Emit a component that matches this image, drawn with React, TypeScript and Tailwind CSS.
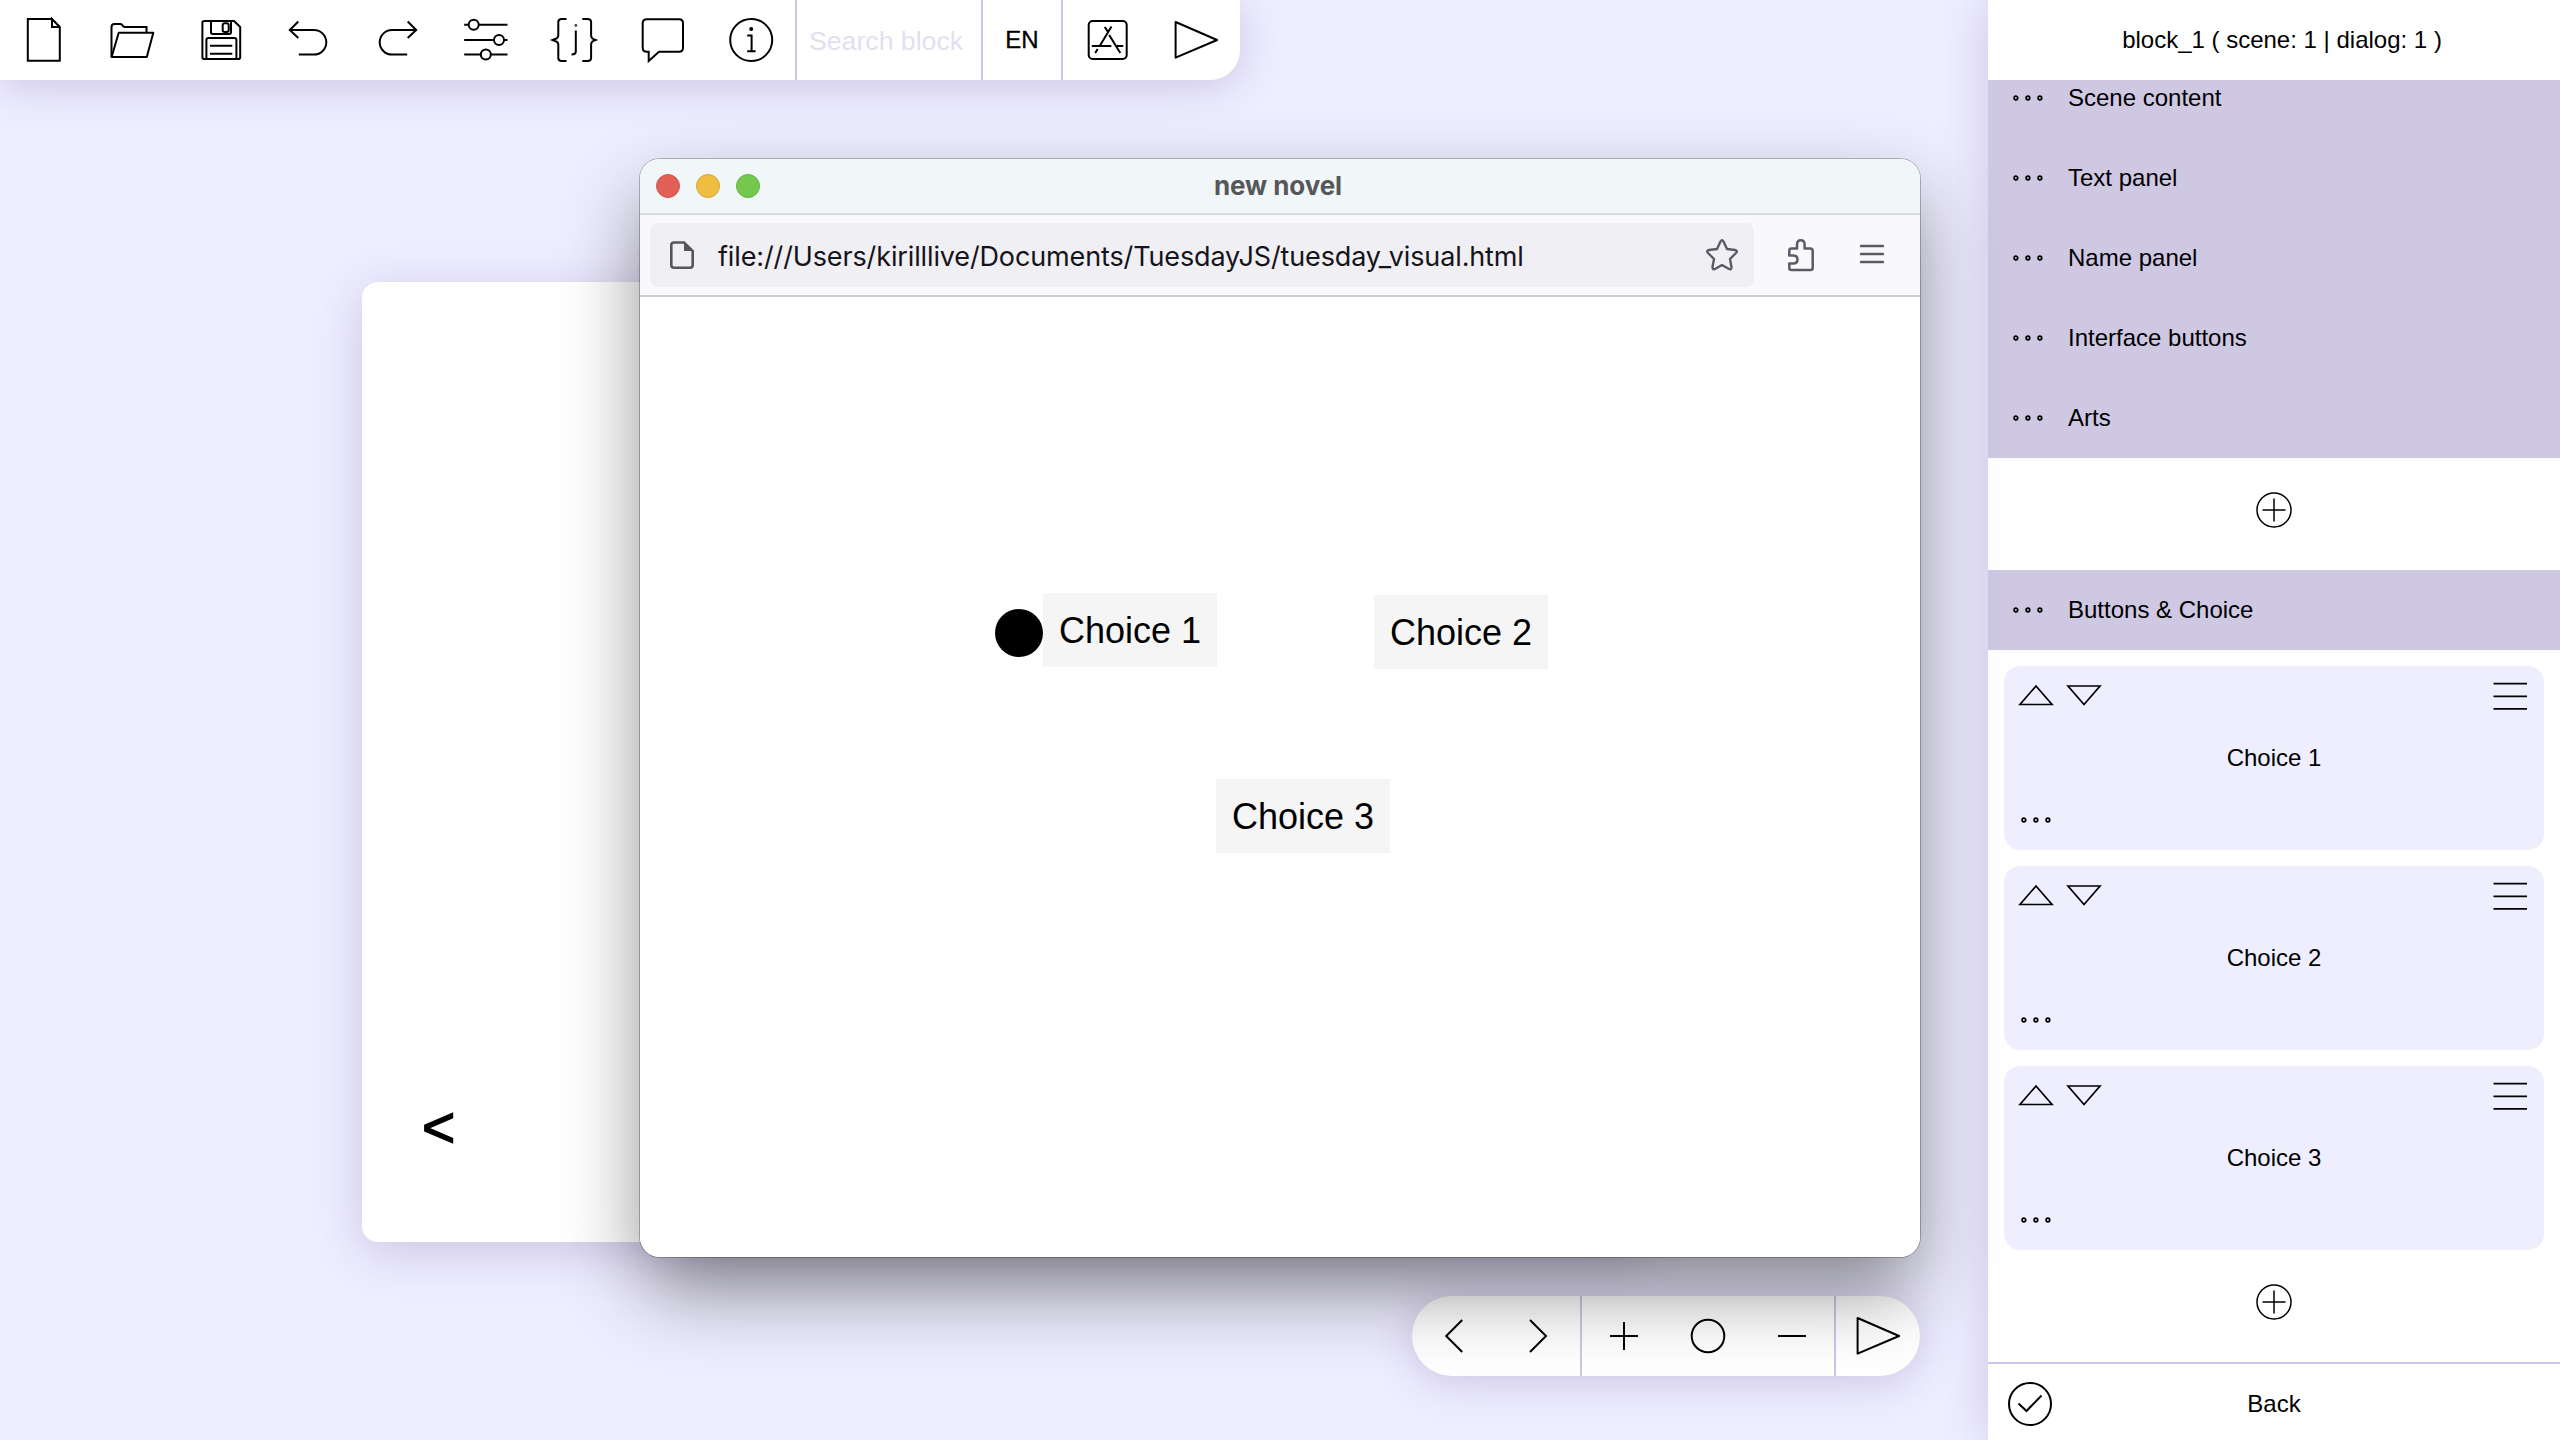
import type { ReactNode } from "react";

type IconProps = { children: ReactNode; w?: number; h?: number; stroke?: number; className?: string };

function Icon({ children, w = 48, h = 48, stroke = 2, className = "" }: IconProps) {
  return (
    <svg
      width={w}
      height={h}
      viewBox={`0 0 ${w} ${h}`}
      fill="none"
      stroke="currentColor"
      strokeWidth={stroke}
      className={`block shrink-0 overflow-visible ${className}`}
    >
      {children}
    </svg>
  );
}

const toolbarIcons: ReactNode[] = [
  <>
    <path d="M32 3H7.8V44.7H39.8V11L32 3V11H39.8" />
  </>,
  <>
    <path d="M10.7 16.7H45.3L38.8 41H3.6Z" strokeLinejoin="round" />
    <path d="M3.5 41V11Q3.5 8 6.5 8H12.5Q13.8 8 14.3 9.2T16.5 11H38.5V16.7" />
  </>,
  <>
    <path d="M7 5H37L43.2 11V41.2Q43.2 43 41.4 43H7.2Q5.4 43 5.4 41.2V6.8Q5.4 5 7.2 5Z" />
    <path d="M14 5V16.3Q14 18 15.8 18H32.2Q34 18 34 16.3V5" />
    <rect x="25.7" y="7.3" width="6" height="8.8" rx="2" />
    <path d="M9.4 43V24Q9.4 22 11.4 22H37.4Q39.4 22 39.4 24V43" />
    <path d="M13 29.7H35.3M13 37.7H35.3" />
  </>,
  <path d="M13.3 5.5L4.8 14L13.3 22M4.8 14H29A12.3 12.3 0 0 1 29 38.6H13.8" />,
  <path d="M34.7 5.5L43.2 14L34.7 22M43.2 14H19A12.3 12.3 0 0 0 19 38.6H34.2" />,
  <>
    <path d="M2.2 8.8H6.5M16.6 8.8H45.5M2.2 24H32M42 24H45.5M2.2 38.6H18.7M28.9 38.6H45.5" />
    <circle cx="11.7" cy="8.8" r="5" />
    <circle cx="37" cy="24" r="5" />
    <circle cx="23.8" cy="38.6" r="5" />
  </>,
  <>
    <path d="M16.5 3H11.8Q8.3 3 8.3 6V19Q8.3 22 5.8 22.8L2.6 24L5.8 25.2Q8.3 26 8.3 29V42Q8.3 45 11.8 45H16.5" />
    <path d="M32.3 3H37.5Q41.1 3 41.1 6V19Q41.1 22 43 22.8L45.8 24L43 25.2Q41.1 26 41.1 29V42Q41.1 45 37.5 45H32.3" />
    <circle cx="25.8" cy="9.4" r="1" strokeWidth="1" />
    <path d="M25.8 14.5V35.5Q25.8 38.3 21.5 38.5" />
  </>,
  <path d="M8.8 3.3H41Q45 3.3 45 7.3V31.7Q45 35.7 41 35.7H21L10.7 45V35.7H8.8Q4.7 35.7 4.7 31.7V7.3Q4.7 3.3 8.8 3.3Z" />,
  <>
    <circle cx="24.2" cy="24" r="21" />
    <circle cx="24.2" cy="13" r="2" fill="currentColor" stroke="none" />
    <path d="M20.2 19.5H24.6V35.3M20.2 35.3H28.6" />
  </>,
];

const Play = () => (
  <Icon>
    <path d="M3.6 6L45.1 24L3.6 41.6Z" strokeLinejoin="round" />
  </Icon>
);

const Dots = () => (
  <Icon w={32} h={10} stroke={1.7}>
    <circle cx="3.9" cy="5" r="1.8" />
    <circle cx="15.9" cy="5" r="1.8" />
    <circle cx="27.9" cy="5" r="1.8" />
  </Icon>
);

const PlusCircle = () => (
  <Icon w={40} h={40} stroke={1.5}>
    <circle cx="20" cy="20" r="17" />
    <path d="M8.5 20H31.5M20 8.5V31.5" />
  </Icon>
);

function Toolbar() {
  return (
    <div className="flex h-20 w-[1240px] rounded-br-[30px] bg-white shadow-[0_6px_44px_#c9c4e4]">
      <div className="flex w-[795px]">
        {toolbarIcons.map((icon, i) => (
          <button key={i} className="flex flex-1 items-center justify-center">
            <Icon>{icon}</Icon>
          </button>
        ))}
      </div>
      <div className="flex w-[188px] items-center border-x-2 border-[#cdc7e6] pt-px pl-3 text-[26.67px] text-[#e2dff0]">
        Search block
      </div>
      <div className="flex w-20 items-center justify-center border-r-2 border-[#cdc7e6] text-[24px] [-webkit-text-stroke:0.3px_black]">
        EN
      </div>
      <div className="flex flex-1">
        <button className="flex flex-1 items-center justify-center">
          <Icon>
            <rect x="5.7" y="5" width="38" height="38" rx="4" />
            <path d="M28.5 10.5L16.7 30M21.7 11L25.6 16.6M26.2 19L37.3 37M8.8 30H28.3M32 30H40.3M14.7 33L12.2 37" />
          </Icon>
        </button>
        <button className="flex flex-1 items-center justify-center">
          <Play />
        </button>
      </div>
    </div>
  );
}

function BottomBar() {
  return (
    <div className="mt-[54px] ml-[1412px] flex h-20 w-[508px] rounded-full bg-white shadow-[0_6px_44px_#c9c4e4]">
      <div className="flex w-[168px] items-center">
        <div className="flex flex-1 justify-center">
          <Icon>
            <path d="M32.2 8L16.2 24L32.2 40" />
          </Icon>
        </div>
        <div className="flex flex-1 justify-center">
          <Icon>
            <path d="M16 8L32 24L16 40" />
          </Icon>
        </div>
      </div>
      <div className="flex w-[256px] items-center border-x-2 border-[#cdc7e6]">
        <div className="flex flex-1 justify-center">
          <Icon>
            <path d="M10 24H38M24 10V38" />
          </Icon>
        </div>
        <div className="flex flex-1 justify-center">
          <Icon>
            <circle cx="24" cy="24" r="16.3" />
          </Icon>
        </div>
        <div className="flex flex-1 justify-center">
          <Icon>
            <path d="M10 24H38" />
          </Icon>
        </div>
      </div>
      <div className="flex flex-1 items-center justify-center">
        <Play />
      </div>
    </div>
  );
}

function SectionRow({ label }: { label: string }) {
  return (
    <div className="flex h-20 shrink-0 items-center bg-[#cec8e3] pl-6">
      <Dots />
      <span className="pl-6">{label}</span>
    </div>
  );
}

function ChoiceCard({ label }: { label: string }) {
  return (
    <div className="flex h-[184px] shrink-0 flex-col justify-between rounded-2xl bg-[#efeeff] px-4">
      <div className="flex h-[60px] items-center justify-between">
        <div className="flex gap-2">
          <Icon w={40} h={28} stroke={1.7}>
            <path d="M16 4L32 22.500H0Z" />
          </Icon>
          <Icon w={40} h={28} stroke={1.7}>
            <path d="M16 22.500L32 4H0Z" />
          </Icon>
        </div>
        <Icon w={36} h={32} stroke={1.8}>
          <path d="M1.5 3.7H35M1.5 16.4H35M1.5 28.8H35" />
        </Icon>
      </div>
      <div className="text-center leading-8">{label}</div>
      <div className="flex h-[60px] items-center">
        <Dots />
      </div>
    </div>
  );
}

function Sidebar() {
  return (
    <aside className="relative flex h-full w-[572px] flex-col bg-white text-[24px] shadow-[0_0_44px_#c9c4e4]">
      <header className="flex h-20 shrink-0 items-center justify-center pl-4 whitespace-pre">
        block_1 ( scene: 1 | dialog: 1 )
      </header>
      <div className="flex flex-1 flex-col overflow-hidden">
        <div className="-mt-[22px] flex flex-col">
          {["Scene content", "Text panel", "Name panel", "Interface buttons", "Arts"].map((label) => (
            <SectionRow key={label} label={label} />
          ))}
        </div>
        <div className="flex h-[112px] shrink-0 justify-center pt-8">
          <PlusCircle />
        </div>
        <SectionRow label="Buttons & Choice" />
        <div className="flex flex-col gap-4 px-4 pt-4">
          <ChoiceCard label="Choice 1" />
          <ChoiceCard label="Choice 2" />
          <ChoiceCard label="Choice 3" />
        </div>
        <div className="flex justify-center pt-8">
          <PlusCircle />
        </div>
      </div>
      <footer className="grid h-[78px] shrink-0 grid-cols-[84px_1fr_84px] items-center border-t-2 border-[#cdc7e2] pt-1">
        <Icon className="ml-[18px]">
          <circle cx="24" cy="24" r="21" />
          <path d="M12.5 23.5L20.5 31L35.5 15.5" />
        </Icon>
        <span className="text-center">Back</span>
      </footer>
    </aside>
  );
}

function NovelButton({ label, className }: { label: string; className: string }) {
  return (
    <div
      className={`absolute flex h-[74px] w-[174px] items-center justify-center bg-[#f5f5f5] pt-px text-[36px] ${className}`}
    >
      {label}
    </div>
  );
}

function BrowserWindow() {
  return (
    <div className="absolute top-[159px] left-[640px] flex h-[1098px] w-[1280px] flex-col overflow-hidden rounded-[20px] bg-white">
      <div className="grid h-14 shrink-0 grid-cols-[1fr_auto_1fr] items-center border-b-2 border-[#d6dcdf] bg-[#f1f6f9] pr-5 pl-4">
        <div className="flex gap-4">
          <span className="size-6 rounded-full border border-[#cf5650] bg-[#e25f58]" />
          <span className="size-6 rounded-full border border-[#d8a437] bg-[#efbd3f]" />
          <span className="size-6 rounded-full border border-[#60b440] bg-[#76c84c]" />
        </div>
        <span className="pb-px font-['Inter'] text-[26px] font-bold tracking-[-0.1px] text-[#555759]">new novel</span>
      </div>
      <div className="flex h-[82px] shrink-0 items-center border-b-2 border-[#cccccf] bg-[#f9f9fb] pl-2.5 text-[#5b5b66]">
        <div className="flex h-16 w-[1104px] items-center rounded-lg bg-[#f0eff4] pr-3.5 pl-[18px]">
          <Icon w={28} h={32} stroke={2.6} className="text-[#55555c]">
            <path d="M6 3.5H16L24.7 12V26Q24.7 28.7 22 28.7H6Q3.3 28.7 3.3 26V6Q3.3 3.5 6 3.5Z" />
            <path d="M16 3.5V12H24.7Z" fill="currentColor" stroke="none" />
          </Icon>
          <span className="flex-1 pt-1 pl-[22px] font-['Inter'] text-[27px] tracking-[-0.13px] whitespace-nowrap text-[#15141a]">
            file:///Users/kirilllive/Documents/TuesdayJS/tuesday_visual.html
          </span>
          <Icon w={36} h={36} stroke={2.4}>
            <path
              d="M16.5 4.5Q18 2 19.5 4.5L23 12L31 13Q34 13.7 32 16L26 22L27.5 30Q27.5 33 25 32L18 28L11 32Q8.500 33 8.500 30L10 22L4 16Q2 13.700 5 13L13 12Z"
              strokeLinejoin="round"
            />
          </Icon>
        </div>
        <Icon w={32} h={36} stroke={2.5} className="ml-8">
          <path
            d="M5.500 11.500H11V7.500Q11 3.200 14.800 3.200T18.600 7.500V11.500H24Q26.700 11.500 26.700 14V31Q26.700 33 24.500 33H5.500Q3.300 33 3.300 31V26.500H7Q11.500 26.500 11.500 22.500T7 18.500H3.300V13.700Q3.300 11.500 5.500 11.500Z"
            strokeLinejoin="round"
          />
        </Icon>
        <Icon w={28} h={24} stroke={2.4} className="mb-[2px] ml-10">
          <path d="M3 4H25M3 12H25M3 20H25" strokeLinecap="round" />
        </Icon>
      </div>
      <div className="relative flex-1">
        <div className="absolute top-[312px] left-[355px] size-12 rounded-full bg-black" />
        <NovelButton label="Choice 1" className="top-[296px] left-[403px]" />
        <NovelButton label="Choice 2" className="top-[298px] left-[734px]" />
        <NovelButton label="Choice 3" className="top-[482px] left-[576px]" />
      </div>
    </div>
  );
}

export default function App() {
  return (
    <div className="relative flex h-[1440px] w-[2560px] overflow-hidden bg-[#efeeff] font-['Liberation_Sans',sans-serif] text-black">
      <main className="flex w-[1988px] flex-col">
        <Toolbar />
        <div className="mt-[202px] ml-[362px] flex h-[960px] w-[1280px] items-end rounded-2xl bg-white pb-[86px] pl-[60px] text-[57px] leading-none shadow-[0_10px_50px_#c9c4e4] [-webkit-text-stroke:1.4px_black]">
          &lt;
        </div>
        <BottomBar />
      </main>
      <Sidebar />
      <div className="pointer-events-none absolute top-[159px] left-[640px] h-[1098px] w-[1280px] rounded-[20px] shadow-[0_0_0_1px_rgba(0,0,0,0.25),0_36px_80px_-4px_rgba(0,0,0,0.46)]" />
      <BrowserWindow />
    </div>
  );
}
